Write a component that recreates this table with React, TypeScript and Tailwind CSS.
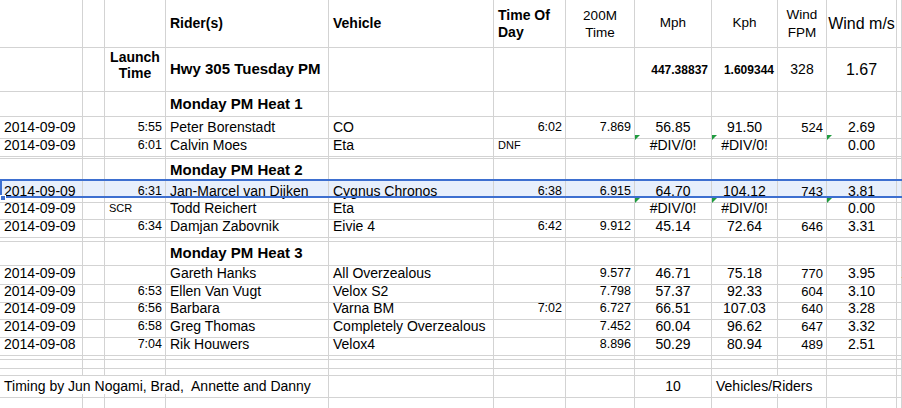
import type { ReactNode } from "react";

type Cell = { t?: ReactNode; c?: string; nb?: boolean; tri?: boolean };

const cols =
  "grid grid-cols-[83px_22px_61px_163px_165px_72px_69px_77px_66px_49px_70px_1fr]";

const left = (t: ReactNode, c = "text-[14px]"): Cell => ({ t, c: `justify-start pl-[4px] ${c}` });
const right = (t: ReactNode, c = "text-[12.5px]"): Cell => ({ t, c: `justify-end pr-[3px] ${c}` });
const mid = (t: ReactNode, c = "text-[14px]"): Cell => ({ t, c: `justify-center ${c}` });
const E: Cell = {};
const err = (): Cell => ({ ...mid("#DIV/0!"), tri: true });

function Row({ h, cells, sel }: { h: string; cells: Cell[]; sel?: boolean }) {
  const all = [...cells, ...Array(12 - cells.length).fill(E)] as Cell[];
  return (
    <div className={`${cols} ${h} relative ${sel ? "bg-[#e7effc]" : ""}`}>
      {all.map((cell, i) => (
        <div
          key={i}
          className={`relative flex min-w-0 items-center whitespace-pre border-b border-r border-b-[#d3d3d3] ${
            cell.nb ? "border-r-transparent" : "border-r-[#d3d3d3]"
          } ${cell.c ?? ""}`}
        >
          {cell.tri && (
            <span className="absolute left-0 top-0 h-0 w-0 border-t-[5px] border-r-[5px] border-t-[#1f9b3f] border-r-transparent" />
          )}
          {cell.t}
        </div>
      ))}
      {sel && (
        <>
          <div className="pointer-events-none absolute left-0 right-0 top-[-2px] h-[19px] border-y-2 border-l-2 border-[#3d6fd0]" />
          <div className="absolute left-0 top-[14px] h-[6px] w-[6px] border border-white bg-[#3d6fd0]" />
        </>
      )}
    </div>
  );
}

type Rider = {
  date: string;
  launch?: string;
  launchNote?: string;
  name: string;
  vehicle: string;
  tod?: string;
  todNote?: string;
  t200?: string;
  mph?: string;
  kph?: string;
  fpm?: string;
  ms: string;
  extra?: string;
};

function riderCells(r: Rider): Cell[] {
  const dnf = r.mph === undefined;
  return [
    left(r.date),
    E,
    r.launchNote ? left(r.launchNote, "text-[11px] pl-[2px]") : right(r.launch ?? ""),
    left(r.name),
    left(r.vehicle),
    r.todNote ? left(r.todNote, "text-[11px] pl-[3px]") : right(r.tod ?? ""),
    right(r.t200 ?? ""),
    dnf ? err() : mid(r.mph),
    dnf ? err() : mid(r.kph),
    right(r.fpm ?? "", "text-[13px]"),
    dnf ? { ...mid(r.ms), tri: true } : mid(r.ms),
    r.extra ? left(r.extra, "text-[14px] pl-[1px]") : E,
  ];
}

const heat = (title: string): Cell[] => [E, E, E, left(title, "text-[15px] font-bold")];

export default function App() {
  return (
    <div className="h-[408px] overflow-hidden bg-white font-['Liberation_Sans',Arial,sans-serif] text-black">
      <Row
        h="h-[48px]"
        cells={[
          E,
          E,
          E,
          left("Rider(s)", "text-[14px] font-bold"),
          left("Vehicle", "text-[14px] font-bold"),
          left(<span className="leading-[17px]">Time Of<br />Day</span>, "text-[14px] font-bold"),
          mid(<span className="text-center leading-[17px]">200M<br />Time</span>, "text-[13.5px]"),
          mid("Mph", "text-[13.5px]"),
          mid("Kph", "text-[13.5px]"),
          mid(<span className="text-center leading-[18px]">Wind<br />FPM</span>, "text-[13.5px]"),
          mid("Wind m/s", "text-[16px]"),
        ]}
      />
      <Row
        h="h-[44px]"
        cells={[
          E,
          E,
          { t: <span className="text-center leading-[16px]">Launch<br />Time</span>, c: "justify-center items-start pt-[1px] text-[14px] font-bold" },
          left("Hwy 305 Tuesday PM", "text-[15px] font-bold"),
          E,
          E,
          E,
          right("447.38837", "text-[12px] font-bold"),
          right("1.609344", "text-[12px] font-bold"),
          mid("328"),
          mid("1.67", "text-[16px]"),
        ]}
      />
      <Row h="h-[25px]" cells={heat("Monday PM Heat 1")} />
      <Row h="h-[18px]" cells={riderCells({ date: "2014-09-09", launch: "5:55", name: "Peter Borenstadt", vehicle: "CO", tod: "6:02", t200: "7.869", mph: "56.85", kph: "91.50", fpm: "524", ms: "2.69" })} />
      <Row h="h-[18px]" cells={riderCells({ date: "2014-09-09", launch: "6:01", name: "Calvin Moes", vehicle: "Eta", todNote: "DNF", ms: "0.00" })} />
      <Row h="h-[6px]" cells={[]} />
      <Row h="h-[22px]" cells={heat("Monday PM Heat 2")} />
      <Row sel h="h-[17px]" cells={riderCells({ date: "2014-09-09", launch: "6:31", name: "Jan-Marcel van Dijken", vehicle: "Cygnus Chronos", tod: "6:38", t200: "6.915", mph: "64.70", kph: "104.12", fpm: "743", ms: "3.81" })} />
      <Row h="h-[18px]" cells={riderCells({ date: "2014-09-09", launchNote: "SCR", name: "Todd Reichert", vehicle: "Eta", ms: "0.00" })} />
      <Row h="h-[18px]" cells={riderCells({ date: "2014-09-09", launch: "6:34", name: "Damjan Zabovnik", vehicle: "Eivie 4", tod: "6:42", t200: "9.912", mph: "45.14", kph: "72.64", fpm: "646", ms: "3.31" })} />
      <Row h="h-[4px]" cells={[]} />
      <Row h="h-[4px]" cells={[]} />
      <Row h="h-[21px]" cells={heat("Monday PM Heat 3")} />
      <Row h="h-[18px]" cells={riderCells({ date: "2014-09-09", name: "Gareth Hanks", vehicle: "All Overzealous", t200: "9.577", mph: "46.71", kph: "75.18", fpm: "770", ms: "3.95", extra: "1" })} />
      <Row h="h-[17px]" cells={riderCells({ date: "2014-09-09", launch: "6:53", name: "Ellen Van Vugt", vehicle: "Velox S2", t200: "7.798", mph: "57.37", kph: "92.33", fpm: "604", ms: "3.10" })} />
      <Row h="h-[18px]" cells={riderCells({ date: "2014-09-09", launch: "6:56", name: "Barbara", vehicle: "Varna BM", tod: "7:02", t200: "6.727", mph: "66.51", kph: "107.03", fpm: "640", ms: "3.28" })} />
      <Row h="h-[18px]" cells={riderCells({ date: "2014-09-09", launch: "6:58", name: "Greg Thomas", vehicle: "Completely Overzealous", t200: "7.452", mph: "60.04", kph: "96.62", fpm: "647", ms: "3.32" })} />
      <Row h="h-[18px]" cells={riderCells({ date: "2014-09-08", launch: "7:04", name: "Rik Houwers", vehicle: "Velox4", t200: "8.896", mph: "50.29", kph: "80.94", fpm: "489", ms: "2.51" })} />
      <Row h="h-[8px]" cells={[]} />
      <Row h="h-[9px]" cells={[]} />
      <Row h="h-[7px]" cells={[]} />
      <Row
        h="h-[18px]"
        cells={[
          { ...left("Timing by Jun Nogami, Brad,  Annette and Danny"), nb: true },
          { nb: true },
          { nb: true },
          E,
          E,
          E,
          E,
          mid("10"),
          { ...left("Vehicles/Riders"), nb: true },
        ]}
      />
      <Row h="h-[30px]" cells={[]} />
    </div>
  );
}
